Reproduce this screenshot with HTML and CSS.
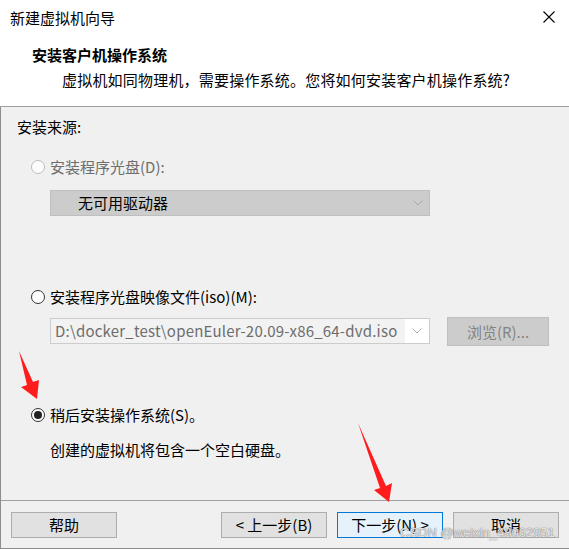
FILE: index.html
```html
<!DOCTYPE html>
<html lang="zh-CN">
<head>
<meta charset="utf-8">
<title>新建虚拟机向导</title>
<link rel="stylesheet" href="styles.css">
</head>
<body>
<div class="window">
  <div class="titlebar">
    <span class="title">新建虚拟机向导</span>
    <svg class="close" width="12" height="12" viewBox="0 0 12 12"><path d="M0.5 0.5 L11.5 11.5 M11.5 0.5 L0.5 11.5" stroke="#000" stroke-width="1.1" fill="none"/></svg>
  </div>
  <div class="header">
    <div class="header-title">安装客户机操作系统</div>
    <div class="header-sub">虚拟机如同物理机，需要操作系统。您将如何安装客户机操作系统?</div>
  </div>
  <div class="content">
    <div class="source-label">安装来源:</div>
    <div class="option option-1 disabled">
      <span class="radio"></span>
      <span class="label">安装程序光盘(D):</span>
    </div>
    <div class="select select-disabled">
      <span class="select-text">无可用驱动器</span>
      <svg class="chev" width="10" height="6" viewBox="0 0 10 6"><path d="M0.5 0.5 L5 5 L9.5 0.5" stroke="#a8a8a8" fill="none"/></svg>
    </div>
    <div class="option option-2">
      <span class="radio"></span>
      <span class="label">安装程序光盘映像文件(iso)(M):</span>
    </div>
    <div class="iso-row">
      <div class="combo">
        <span class="combo-field">D:\docker_test\openEuler-20.09-x86_64-dvd.iso</span>
        <span class="combo-drop"><svg class="chev" width="10" height="6" viewBox="0 0 10 6"><path d="M0.5 0.5 L5 5 L9.5 0.5" stroke="#b0b0b0" fill="none"/></svg></span>
      </div>
      <div class="browse">浏览(R)...</div>
    </div>
    <div class="option option-3">
      <span class="radio checked"></span>
      <span class="label">稍后安装操作系统(S)。</span>
    </div>
    <div class="note">创建的虚拟机将包含一个空白硬盘。</div>
  </div>
  <div class="footer">
    <div class="btn">帮助</div>
    <div class="btn-group">
      <div class="btn">&lt; 上一步(B)</div>
      <div class="btn btn-focus">下一步(N) &gt;</div>
      <div class="btn">取消</div>
    </div>
  </div>
  <svg class="arrows" width="569" height="549" viewBox="0 0 569 549">
    <polygon points="19,351 33,382 39,380 37,399 21,387 27,385" fill="#ff1c1c"/>
    <polygon points="358,423 386,486 392,483 389,502 374,490 380,488" fill="#ff1c1c"/>
  </svg>
  <div class="watermark">CSDN @weixin_48062951</div>
</div>
</body>
</html>
```

FILE: styles.css
```css
html, body {
  margin: 0;
  padding: 0;
  background: #ffffff;
}

.window {
  position: relative;
  width: 569px;
  height: 549px;
  background: #f0f0f0;
  display: flex;
  flex-direction: column;
  font-family: "Noto Sans CJK SC", "Noto Sans", sans-serif;
  font-size: 15px;
  line-height: 20px;
  color: #000;
  overflow: hidden;
}

.titlebar {
  height: 36px;
  flex: none;
  background: #ffffff;
  display: flex;
  align-items: center;
  justify-content: space-between;
  padding: 0 14px 0 10px;
}

.title {
  font-size: 15px;
}

.close {
  display: block;
  margin-top: -2px;
}

.header {
  flex: none;
  height: 71px;
  box-sizing: border-box;
  background: #ffffff;
  border-bottom: 1px solid #a0a0a0;
  padding-top: 9px;
}

.header-title {
  font-weight: bold;
  padding-left: 32px;
}

.header-sub {
  margin-top: 5px;
  padding-left: 62px;
  letter-spacing: 0.2px;
}

.content {
  flex: 1;
  border-left: 1px solid #8c8c8c;
}

.source-label {
  margin: 10px 0 0 16px;
}

.option {
  display: flex;
  align-items: center;
  padding-left: 30px;
  height: 20px;
}

.option-1 { margin-top: 20px; }
.option-2 { margin-top: 71px; }
.option-3 { margin-top: 59px; }

.radio {
  width: 14px;
  height: 14px;
  box-sizing: border-box;
  border: 1px solid #333333;
  border-radius: 50%;
  background: #ffffff;
  margin-right: 5px;
  position: relative;
  flex: none;
}

.disabled .radio {
  border-color: #bcbcbc;
  background: #fcfcfc;
}

.disabled .label {
  color: #6d6d6d;
}

.radio.checked::after {
  content: "";
  position: absolute;
  left: 2px;
  top: 2px;
  width: 8px;
  height: 8px;
  border-radius: 50%;
  background: #222222;
}

.select {
  margin: 13px 0 0 49px;
  width: 380px;
  height: 26px;
  box-sizing: border-box;
  display: flex;
  align-items: center;
  justify-content: space-between;
}

.select-disabled {
  background: #cccccc;
  border: 1px solid #bfbfbf;
  padding: 0 6px 0 27px;
}

.chev {
  display: block;
}

.iso-row {
  margin: 11px 0 0 49px;
  display: flex;
  align-items: flex-start;
  gap: 17px;
}

.combo {
  width: 380px;
  height: 26px;
  box-sizing: border-box;
  border: 1px solid #cccccc;
  background: #ffffff;
  display: flex;
}

.combo-field {
  flex: 1;
  background: #f2f2f2;
  color: #6d6d6d;
  padding-left: 4px;
  line-height: 24px;
  letter-spacing: 0.2px;
  white-space: nowrap;
  overflow: hidden;
}

.combo-drop {
  width: 24px;
  display: flex;
  align-items: center;
  justify-content: center;
}

.browse {
  margin-top: -1px;
  width: 102px;
  height: 29px;
  box-sizing: border-box;
  background: #cccccc;
  border: 1px solid #bfbfbf;
  color: #838383;
  display: flex;
  align-items: center;
  justify-content: center;
}

.note {
  margin-top: 15px;
  padding-left: 49px;
}

.footer {
  flex: none;
  height: 49px;
  box-sizing: border-box;
  border-top: 1px solid #a0a0a0;
  border-bottom: 1px solid #8c8c8c;
  border-left: 1px solid #8c8c8c;
  padding: 11px 10px 0 10px;
  display: flex;
  justify-content: space-between;
  align-items: flex-start;
}

.btn-group {
  display: flex;
  gap: 10px;
}

.btn {
  width: 106px;
  height: 26px;
  box-sizing: border-box;
  background: #e1e1e1;
  border: 1px solid #adadad;
  display: flex;
  align-items: center;
  justify-content: center;
  white-space: nowrap;
}

.btn-focus {
  background: #e5f1fb;
  border-color: #0078d7;
}

.arrows {
  position: absolute;
  left: 0;
  top: 0;
  pointer-events: none;
}

.watermark {
  position: absolute;
  left: 400px;
  top: 524px;
  font-family: "Liberation Sans", Arial, sans-serif;
  font-size: 13px;
  line-height: 18px;
  color: rgba(255, 255, 255, 0.8);
  text-shadow: 0 0 1px #6f6f6f, 0 0 1px #8a8a8a;
  white-space: nowrap;
}
```
